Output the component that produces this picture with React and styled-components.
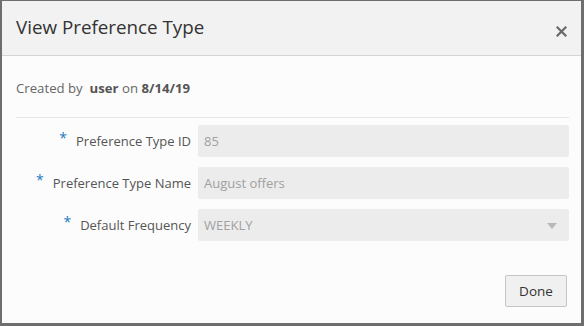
import styled, { createGlobalStyle } from "styled-components";

const Global = createGlobalStyle`
  html, body {
    margin: 0;
    padding: 0;
    background: #ffffff;
  }
  * { box-sizing: border-box; }
`;

const fields = [
  { label: "Preference Type ID", value: "85" },
  { label: "Preference Type Name", value: "August offers" },
  { label: "Default Frequency", value: "WEEKLY", select: true },
];

export default function App() {
  return (
    <>
      <Global />
      <Dialog>
        <Header>
          <Title>View Preference Type</Title>
          <Close aria-label="Close">
            <svg width="11" height="11" viewBox="0 0 11 11">
              <path d="M1.5 1.5 L9.5 9.5 M9.5 1.5 L1.5 9.5" stroke="#6a6a6a" strokeWidth="2.2" strokeLinecap="square" />
            </svg>
          </Close>
        </Header>
        <Body>
          <Created>
            Created by&nbsp; <b>user</b> on <b>8/14/19</b>
          </Created>
          <Divider />
          <Form>
            {fields.map((f) => (
              <Row key={f.label}>
                <Label>
                  <Star>*</Star>
                  {f.label}
                </Label>
                <Field>
                  {f.value}
                  {f.select && <Arrow />}
                </Field>
              </Row>
            ))}
          </Form>
        </Body>
        <Footer>
          <Button>Done</Button>
        </Footer>
      </Dialog>
    </>
  );
}

const Dialog = styled.div`
  width: 584px;
  height: 326px;
  display: flex;
  flex-direction: column;
  background: #fcfcfc;
  border-style: solid;
  border-color: #6e6e6e;
  border-width: 1px 3px 3px 2px;
  font-family: "Open Sans", "Noto Sans", sans-serif;
`;

const Header = styled.div`
  height: 55px;
  flex: none;
  display: flex;
  align-items: center;
  justify-content: space-between;
  padding: 0 12px 0 14px;
  background: #f2f2f2;
  border-bottom: 1px solid #d4d4d4;
`;

const Title = styled.h1`
  margin: 0 0 2px;
  font-size: 18.8px;
  font-weight: 400;
  color: #333;
`;

const Close = styled.button`
  width: 16px;
  height: 16px;
  padding: 0;
  margin-top: 6px;
  border: 0;
  background: none;
  display: flex;
  align-items: center;
  justify-content: center;
`;

const Body = styled.div`
  flex: 1;
  padding: 0 12px 0 14px;
`;

const Created = styled.div`
  height: 61px;
  display: flex;
  align-items: center;
  padding-top: 2px;
  font-size: 13.2px;
  color: #666;
  white-space: pre;

  b {
    font-weight: 700;
    color: #555;
  }
`;

const Divider = styled.div`
  height: 1px;
  background: #e6e6e6;
`;

const Form = styled.div`
  display: flex;
  flex-direction: column;
  gap: 10px;
  padding-top: 7px;
`;

const Row = styled.div`
  display: grid;
  grid-template-columns: 175px 1fr;
  column-gap: 7px;
  align-items: center;
`;

const Label = styled.label`
  display: flex;
  justify-content: flex-end;
  align-items: center;
  font-size: 13px;
  color: #555;
`;

const Star = styled.span`
  color: #1f7ac2;
  font-size: 14px;
  margin-right: 9px;
  position: relative;
  top: -4px;
`;

const Field = styled.div`
  position: relative;
  height: 32px;
  display: flex;
  align-items: center;
  padding: 0 6px;
  background: #ececec;
  border-radius: 2px;
  font-size: 13px;
  color: #a0a0a0;
`;

const Arrow = styled.span`
  position: absolute;
  right: 12px;
  top: 14px;
  width: 0;
  height: 0;
  border-left: 5px solid transparent;
  border-right: 5px solid transparent;
  border-top: 6px solid #b8b8b8;
`;

const Footer = styled.div`
  display: flex;
  justify-content: flex-end;
  padding: 0 14px 16px 0;
`;

const Button = styled.button`
  width: 62px;
  height: 32px;
  background: #f0f0f0;
  border: 1px solid #c6c6c6;
  border-radius: 2px;
  font-family: inherit;
  font-size: 13.5px;
  color: #333;
`;
